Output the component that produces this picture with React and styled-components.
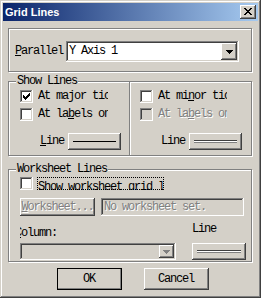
import React from "react";
import styled, { createGlobalStyle } from "styled-components";

const FACE = "#d4d0c8";
const MONO = `"Liberation Mono", "DejaVu Sans Mono", monospace`;

const Global = createGlobalStyle`
  html, body { margin: 0; padding: 0; background: ${FACE}; }
  body { font-family: ${MONO}; }
`;

const raised = `
  box-shadow: inset -1px -1px #404040, inset 1px 1px #ffffff,
    inset -2px -2px #808080, inset 2px 2px ${FACE};
`;
const sunken = `
  box-shadow: inset -1px -1px #ffffff, inset 1px 1px #808080,
    inset -2px -2px ${FACE}, inset 2px 2px #404040;
`;

const Window = styled.div`
  width: 261px;
  height: 298px;
  box-sizing: border-box;
  padding: 3px;
  background: ${FACE};
  box-shadow: inset -1px -1px #404040, inset 1px 1px ${FACE},
    inset -2px -2px #808080, inset 2px 2px #ffffff;
  display: flex;
  flex-direction: column;
`;

const TitleBar = styled.div`
  height: 18px;
  display: flex;
  align-items: center;
  justify-content: space-between;
  padding-left: 2px;
  background: linear-gradient(to right, #0a246a, #a6caf0);
`;

const Title = styled.span`
  font: bold 11px "Liberation Sans", Arial, sans-serif;
  color: #fff;
`;

const CloseBtn = styled.div`
  width: 16px;
  height: 14px;
  margin-right: 2px;
  background: ${FACE};
  ${raised}
  display: flex;
  align-items: center;
  justify-content: center;
  svg { margin: -1px 0 0 0; }
`;

const Content = styled.div`
  display: flex;
  flex-direction: column;
  padding: 7px 0 0 5px;
`;

const Group = styled.div`
  position: relative;
  box-sizing: border-box;
  width: 244px;
  height: ${(p) => p.$h}px;
  margin-top: ${(p) => p.$mt}px;
  border: 1px solid #808080;
  box-shadow: inset 1px 1px #ffffff, 1px 1px #ffffff;
`;

const Legend = styled.span`
  position: absolute;
  top: -7px;
  left: 7px;
  padding: 0 1px;
  background: ${FACE};
  font-size: 12px;
  letter-spacing: -1.2px;
  line-height: 13px;
  color: #000;
  white-space: nowrap;
`;

const Text = styled.span`
  font-family: ${MONO};
  font-size: 12px;
  letter-spacing: -1.2px;
  line-height: 13px;
  white-space: nowrap;
  color: ${(p) => (p.$disabled ? "#808080" : "#000")};
  text-shadow: ${(p) => (p.$disabled ? "1px 1px #ffffff" : "none")};
  ${(p) => (p.$w ? `display:block; width:${p.$w}px; overflow:hidden;` : "")}
`;

const U = styled.u`
  text-decoration: underline;
  text-underline-offset: 1px;
`;

const ParallelRow = styled.div`
  display: flex;
  align-items: center;
  gap: 3px;
  padding: 12px 0 0 6px;
`;

const Combo = styled.div`
  box-sizing: border-box;
  width: ${(p) => p.$w}px;
  height: ${(p) => p.$h}px;
  padding: 2px 2px 2px 3px;
  background: ${(p) => (p.$disabled ? FACE : "#ffffff")};
  ${sunken}
  display: flex;
  align-items: center;
  justify-content: space-between;
`;

const DropBtn = styled.div`
  width: ${(p) => p.$w}px;
  height: 100%;
  background: ${FACE};
  ${raised}
  display: flex;
  align-items: center;
  justify-content: center;
`;

const SplitGrid = styled.div`
  display: grid;
  grid-template-columns: 120px 1fr;
  height: 100%;
`;

const Column = styled.div`
  display: flex;
  flex-direction: column;
  padding: 8px 0 0 ${(p) => p.$pl}px;
  ${(p) =>
    p.$divider
      ? `border-left: 1px solid #808080; box-shadow: inset 1px 0 #ffffff;`
      : ""}
`;

const CheckRow = styled.div`
  display: flex;
  align-items: center;
  gap: ${(p) => p.$gap ?? 5}px;
  height: 13px;
  margin-top: ${(p) => p.$mt ?? 0}px;
`;

const Box = styled.span`
  flex: none;
  width: 13px;
  height: 13px;
  box-sizing: border-box;
  background: ${(p) => (p.$disabled ? FACE : "#ffffff")};
  ${sunken}
  display: flex;
  align-items: center;
  justify-content: center;
`;

const LineRow = styled.div`
  display: flex;
  align-items: center;
  gap: 4px;
  margin-top: ${(p) => p.$mt}px;
  padding-left: ${(p) => p.$pl}px;
`;

const LineBtn = styled.div`
  box-sizing: border-box;
  width: ${(p) => p.$w}px;
  height: 17px;
  padding: 0 5px;
  background: ${FACE};
  ${raised}
  display: flex;
  align-items: center;
`;

const Stroke = styled.div`
  flex: 1;
  ${(p) =>
    p.$double
      ? `height: 1px; border-top: 1px solid #404040; border-bottom: 1px solid #808080; background: #ffffff;`
      : `height: 1px; background: #000;`}
`;

const WsBody = styled.div`
  display: flex;
  flex-direction: column;
  padding: 7px 0 0 11px;
`;

const FocusLabel = styled.span`
  box-sizing: border-box;
  display: block;
  width: 127px;
  height: 13px;
  padding-left: 1px;
  overflow: hidden;
  outline: 1px dotted #000;
  outline-offset: -1px;
`;

const WsRow = styled.div`
  display: flex;
  gap: 6px;
  margin-top: 8px;
`;

const FlatBtn = styled.div`
  box-sizing: border-box;
  width: ${(p) => p.$w}px;
  height: ${(p) => p.$h}px;
  background: ${FACE};
  ${raised}
  display: flex;
  align-items: center;
  justify-content: center;
  ${(p) => (p.$default ? `outline: 1px solid #000; outline-offset: -1px;` : "")}
`;

const Field = styled.div`
  box-sizing: border-box;
  width: 143px;
  height: 18px;
  padding: 0 3px;
  background: ${FACE};
  ${sunken}
  display: flex;
  align-items: center;
`;

const BottomGrid = styled.div`
  display: grid;
  grid-template-columns: 172px 54px;
  row-gap: 2px;
  margin-top: 7px;
`;

const ClipLabel = styled.div`
  width: 60px;
  overflow: hidden;
  span { margin-left: -5px; }
`;

const Buttons = styled.div`
  display: flex;
  justify-content: center;
  gap: 22px;
  margin-top: 6px;
  padding-right: 1px;
`;

const Check = () => (
  <svg width="7" height="7" viewBox="0 0 7 7" shapeRendering="crispEdges">
    <path
      fill="#000"
      d="M6 0h1v3H6z M5 1h1v3H5z M4 2h1v3H4z M3 3h1v3H3z M2 4h1v3H2z M1 3h1v3H1z M0 2h1v3H0z"
    />
  </svg>
);

const Arrow = ({ color = "#000" }) => (
  <svg width="7" height="4" viewBox="0 0 7 4" shapeRendering="crispEdges">
    <path fill={color} d="M0 0h7v1H0z M1 1h5v1H1z M2 2h3v1H2z M3 3h1v1H3z" />
  </svg>
);

const CloseX = () => (
  <svg width="8" height="7" viewBox="0 0 8 7" shapeRendering="crispEdges">
    <path
      fill="#000"
      d="M0 0h2v1H0z M6 0h2v1H6z M1 1h2v1H1z M5 1h2v1H5z M2 2h4v1H2z M3 3h2v1H3z M2 4h4v1H2z M1 5h2v1H1z M5 5h2v1H5z M0 6h2v1H0z M6 6h2v1H6z"
    />
  </svg>
);

export default function App() {
  return (
    <>
      <Global />
      <Window>
        <TitleBar>
          <Title>Grid Lines</Title>
          <CloseBtn>
            <CloseX />
          </CloseBtn>
        </TitleBar>
        <Content>
          <Group $h={44} $mt={0}>
            <ParallelRow>
              <Text>
                <U>P</U>arallel
              </Text>
              <Combo $w={173} $h={21}>
                <Text>Y Axis 1</Text>
                <DropBtn $w={16}>
                  <Arrow />
                </DropBtn>
              </Combo>
            </ParallelRow>
          </Group>

          <Group $h={75} $mt={9}>
            <Legend>Show Lines</Legend>
            <SplitGrid>
              <Column $pl={11}>
                <CheckRow>
                  <Box>
                    <Check />
                  </Box>
                  <Text $w={70}>At major tic</Text>
                </CheckRow>
                <CheckRow $mt={5}>
                  <Box />
                  <Text $w={70}>
                    At la<U>b</U>els on
                  </Text>
                </CheckRow>
                <LineRow $mt={12} $pl={20}>
                  <Text>
                    <U>L</U>ine
                  </Text>
                  <LineBtn $w={53}>
                    <Stroke />
                  </LineBtn>
                </LineRow>
              </Column>
              <Column $pl={10} $divider>
                <CheckRow>
                  <Box />
                  <Text $w={69}>
                    At mi<U>n</U>or tic
                  </Text>
                </CheckRow>
                <CheckRow $mt={5}>
                  <Box $disabled />
                  <Text $w={69} $disabled>
                    At la<U>b</U>els on
                  </Text>
                </CheckRow>
                <LineRow $mt={12} $pl={21}>
                  <Text>Line</Text>
                  <LineBtn $w={53}>
                    <Stroke $double />
                  </LineBtn>
                </LineRow>
              </Column>
            </SplitGrid>
          </Group>

          <Group $h={93} $mt={13}>
            <Legend>Worksheet Lines</Legend>
            <WsBody>
              <CheckRow $gap={4}>
                <Box />
                <FocusLabel>
                  <Text>Show worksheet grid lines</Text>
                </FocusLabel>
              </CheckRow>
              <WsRow>
                <FlatBtn $w={75} $h={18}>
                  <Text $disabled>
                    <U>W</U>orksheet...
                  </Text>
                </FlatBtn>
                <Field>
                  <Text $disabled>No worksheet set.</Text>
                </Field>
              </WsRow>
              <BottomGrid>
                <ClipLabel>
                  <Text $disabled={false}>
                    <U>C</U>olumn:
                  </Text>
                </ClipLabel>
                <Text>Line</Text>
                <Combo $w={156} $h={17} $disabled>
                  <span />
                  <DropBtn $w={15}>
                    <Arrow color="#808080" />
                  </DropBtn>
                </Combo>
                <LineBtn $w={54}>
                  <Stroke $double />
                </LineBtn>
              </BottomGrid>
            </WsBody>
          </Group>

          <Buttons>
            <FlatBtn $w={65} $h={22} $default>
              <Text>OK</Text>
            </FlatBtn>
            <FlatBtn $w={65} $h={22}>
              <Text>Cancel</Text>
            </FlatBtn>
          </Buttons>
        </Content>
      </Window>
    </>
  );
}
